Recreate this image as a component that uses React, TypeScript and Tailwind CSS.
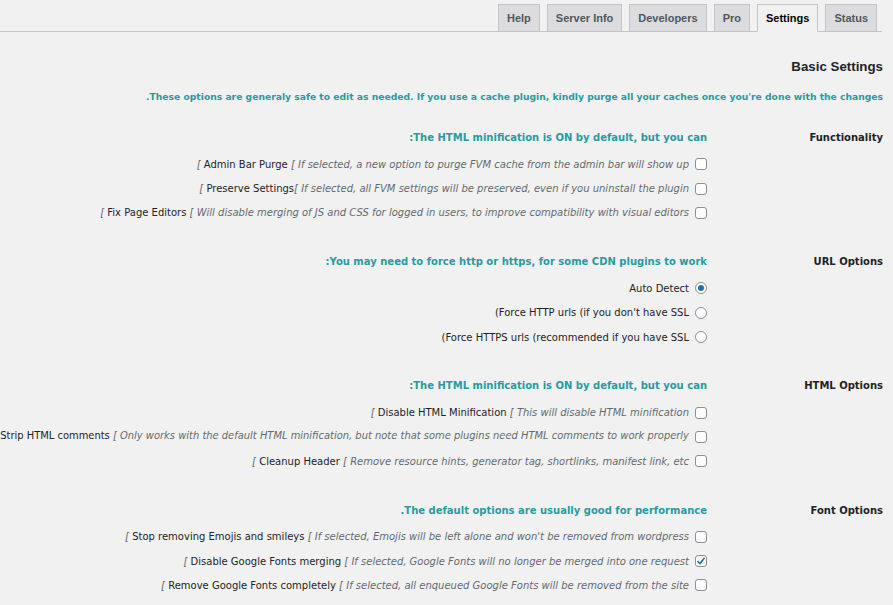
import React from "react";

const FONT = { fontFamily: '"DejaVu Sans", Verdana, sans-serif' };

type Item = { label: string; desc?: string; kind: "check" | "radio"; on?: boolean; tight?: boolean; noPre?: boolean };

const sections: { title: string; heading: string; items: Item[] }[] = [
  {
    title: "Functionality",
    heading: ":The HTML minification is ON by default, but you can",
    items: [
      { label: "Admin Bar Purge", desc: "[ If selected, a new option to purge FVM cache from the admin bar will show up", kind: "check" },
      { label: "Preserve Settings", desc: "[ If selected, all FVM settings will be preserved, even if you uninstall the plugin", kind: "check", tight: true },
      { label: "Fix Page Editors", desc: "[ Will disable merging of JS and CSS for logged in users, to improve compatibility with visual editors", kind: "check" },
    ],
  },
  {
    title: "URL Options",
    heading: ":You may need to force http or https, for some CDN plugins to work",
    items: [
      { label: "Auto Detect", kind: "radio", on: true },
      { label: "(Force HTTP urls (if you don't have SSL", kind: "radio" },
      { label: "(Force HTTPS urls (recommended if you have SSL", kind: "radio" },
    ],
  },
  {
    title: "HTML Options",
    heading: ":The HTML minification is ON by default, but you can",
    items: [
      { label: "Disable HTML Minification", desc: "[ This will disable HTML minification", kind: "check" },
      { label: "Strip HTML comments", desc: "[ Only works with the default HTML minification, but note that some plugins need HTML comments to work properly", kind: "check", noPre: true },
      { label: "Cleanup Header", desc: "[ Remove resource hints, generator tag, shortlinks, manifest link, etc", kind: "check" },
    ],
  },
  {
    title: "Font Options",
    heading: ".The default options are usually good for performance",
    items: [
      { label: "Stop removing Emojis and smileys", desc: "[ If selected, Emojis will be left alone and won't be removed from wordpress", kind: "check" },
      { label: "Disable Google Fonts merging", desc: "[ If selected, Google Fonts will no longer be merged into one request", kind: "check", on: true },
      { label: "Remove Google Fonts completely", desc: "[ If selected, all enqueued Google Fonts will be removed from the site", kind: "check" },
    ],
  },
];

function Check({ on }: { on?: boolean }) {
  return (
    <span className="w-[12px] h-[12px] rounded-[3px] border border-[#8c8f94] bg-white shrink-0 flex items-center justify-center">
      {on && (
        <svg width="10" height="10" viewBox="0 0 10 10">
          <path d="M1.5 5.2 L4 7.6 L8.6 1.8" fill="none" stroke="#2271b1" strokeWidth="1.6" />
        </svg>
      )}
    </span>
  );
}

function Radio({ on }: { on?: boolean }) {
  return (
    <span className="w-[12px] h-[12px] rounded-full border border-[#8c8f94] bg-white shrink-0 flex items-center justify-center">
      {on && <span className="w-[6px] h-[6px] rounded-full bg-[#2271b1]" />}
    </span>
  );
}

const tabs = ["Help", "Server Info", "Developers", "Pro", "Settings", "Status"];

export default function App() {
  return (
    <div className="w-[893px] h-[605px] overflow-hidden bg-[#f1f1f1]" style={FONT}>
      <div className="flex justify-end items-end gap-[7px] pt-[3px] pr-[5px] mr-[11px] border-b border-[#c3c4c7] h-[32px]">
        {tabs.map((t) => {
          const active = t === "Settings";
          return (
            <div
              key={t}
              className={`h-[28px] -mb-px px-[8px] flex items-center border border-[#c3c4c7] text-[11px] font-bold ${
                active ? "bg-[#f1f1f1] border-b-[#f1f1f1] text-black" : "bg-[#dcdcde] text-[#50575e]"
              }`}
              style={{ fontFamily: '"Liberation Sans", Arial, sans-serif' }}
            >
              {t}
            </div>
          );
        })}
      </div>

      <div className="pr-[10px]">
        <div
          className="mt-[25px] h-[20px] leading-[20px] text-right text-[13.3px] font-bold text-[#1d2327]"
          style={{ fontFamily: '"Liberation Sans", Arial, sans-serif' }}
        >
          Basic Settings
        </div>
        <div className="mt-[12px] h-[16px] leading-[16px] text-right text-[9.2px] font-bold text-[#2a9a9f] whitespace-nowrap">
          .These options are generaly safe to edit as needed. If you use a cache plugin, kindly purge all your caches once you're done with the changes
        </div>

        <div className="mt-[23px] flex flex-col gap-[27px]">
          {sections.map((s) => (
            <div key={s.title} className="flex">
              <div className="flex-1 min-w-0 flex flex-col items-end">
                <div className="h-[20px] leading-[20px] text-[10px] font-bold text-[#2a9a9f] whitespace-nowrap">{s.heading}</div>
                <div className="mt-[4px] flex flex-col w-full">
                  {s.items.map((it, i) => (
                    <div
                      key={i}
                      className={`h-[24.4px] flex items-center justify-end whitespace-nowrap ${it.noPre ? "text-[9.93px]" : "text-[10px]"}`}
                    >
                      {it.desc && !it.noPre && <span className="italic text-[#646970]">[&nbsp;</span>}
                      <span className="text-[#1d2327]">{it.label}</span>
                      {it.desc && (
                        <span className="italic text-[#646970]">
                          {it.tight ? "" : "\u00a0"}
                          {it.desc}
                        </span>
                      )}
                      <span className="w-[6px] shrink-0" />
                      {it.kind === "check" ? <Check on={it.on} /> : <Radio on={it.on} />}
                    </div>
                  ))}
                </div>
              </div>
              <div className="w-[176px] shrink-0 text-right h-[20px] leading-[20px] text-[10px] font-bold text-[#1d2327]">
                {s.title}
              </div>
            </div>
          ))}
        </div>
      </div>
    </div>
  );
}
